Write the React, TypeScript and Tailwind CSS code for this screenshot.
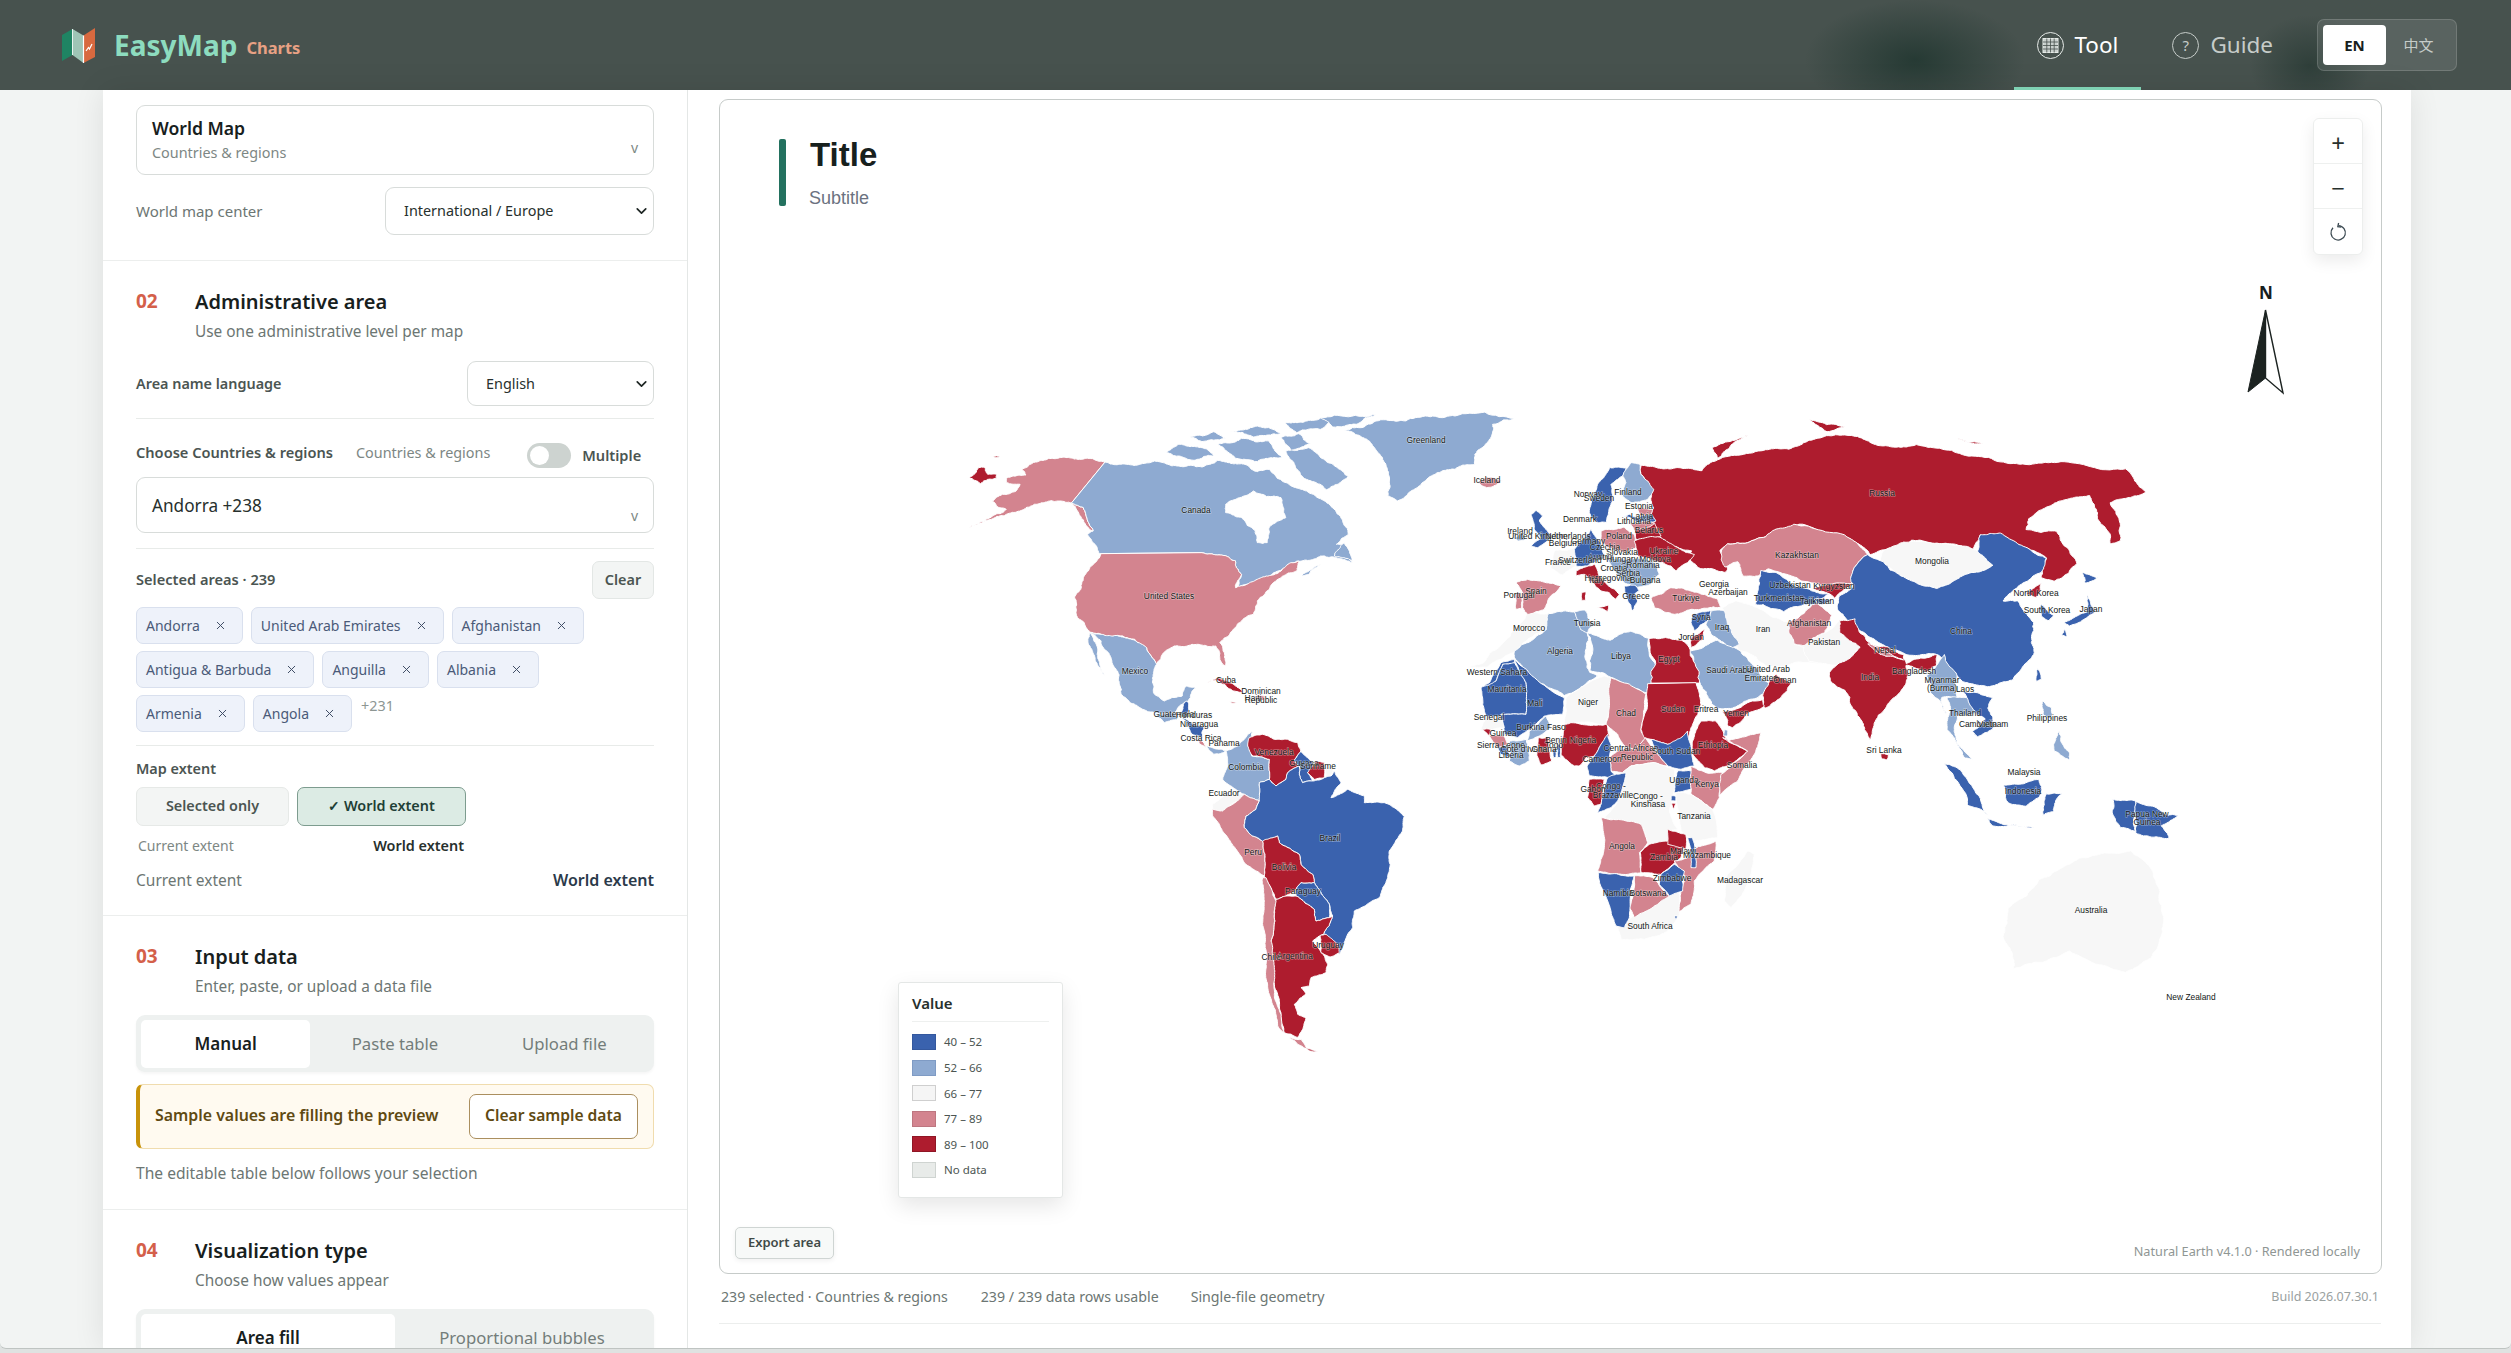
import { ChevronDown, X } from "lucide-react"

const B = "#3a62ae"
const L = "#8eaad1"
const W = "#f7f7f7"
const P = "#d3848f"
const R = "#ae1c2e"

type Shape = [string, string]
type Pt = [number, number]

// traced from the reference, each group in its own crop scale
const NORTH_AMERICA: Shape[] = [
  [P, "415,183 330,306 300,300 260,305 215,320 160,345 90,372 70,380 130,345 165,325 140,315 130,300 155,280 190,270 200,250 165,245 165,232 215,222 205,205 245,182 300,170 350,175"],
  [P, "330,306 360,320 385,390 375,385 345,330"],
  [R, "72,230 95,200 110,198 118,220 140,220 140,232 118,235 100,248 85,238"],
  [R, "133,165 148,165 146,169 135,169"],
  [L, "415,183 470,190 540,180 600,195 660,198 700,178 760,188 800,212 830,205 880,250 925,270 990,320 1030,400 1000,430 1020,430 1040,485 1000,470 960,465 900,480 880,490 820,530 750,560 760,520 745,480 700,462 660,455 400,458 395,440 370,400 385,390 360,320 330,306"],
  [L, "570,155 600,130 660,140 690,165 640,178 600,165"],
  [L, "630,108 690,92 720,112 660,122"],
  [L, "700,130 760,112 830,120 862,168 800,182 745,172"],
  [L, "730,92 800,75 860,98 790,108"],
  [L, "860,108 905,98 935,128 885,150"],
  [L, "872,150 930,140 1000,198 1030,228 975,266 930,238 900,205"],
  [L, "870,65 930,58 1000,50 960,85 900,95"],
  [L, "960,50 1100,40 1050,70 990,78"],
  [L, "910,525 960,490 930,520"],
  [L, "995,465 1020,425 1040,480"],
  ["#ffffff", "720,310 790,270 860,290 872,350 830,380 825,425 800,425 795,390 760,350 720,335"],
  [L, "1020,88 1100,60 1200,50 1300,45 1450,52 1395,70 1385,120 1350,160 1350,190 1300,205 1240,225 1180,280 1155,300 1130,285 1125,190 1110,160 1090,130 1060,105"],
  [P, "1358,245 1380,228 1420,238 1405,252 1380,260"],
  [P, "405,458 660,455 700,462 745,480 760,520 745,560 800,535 860,510 885,485 905,480 900,510 860,530 830,565 800,600 790,640 760,660 730,700 705,725 720,795 712,790 695,735 650,730 590,735 560,760 545,790 520,740 490,715 460,705 405,700 375,692 345,650 338,590 360,530 385,490"],
  [L, "375,695 405,700 460,708 490,718 520,740 545,790 535,830 540,880 565,900 610,885 620,855 645,860 625,900 590,935 560,945 510,925 455,880 450,820 430,770 405,720"],
  [L, "375,695 395,760 415,825 395,790 378,740"],
  [L, "540,940 590,935 600,955 565,965"],
  [B, "615,905 622,900 625,945 610,950"],
  [B, "610,950 665,978 660,1010 635,1000"],
  [P, "650,1010 670,1040 655,1030"],
  [L, "672,1035 720,1050 690,1060"],
  [R, "672,845 700,830 730,845 765,875 740,870 700,838"],
  [P, "800,880 822,885 815,900 800,895"],
  [P, "730,902 748,905 738,908"],
]

const SOUTH_AMERICA: Shape[] = [
  [L, "350,100 365,90 355,125 362,165 415,175 415,235 385,245 385,300 340,280 275,235 290,195 285,150 300,145 320,135"],
  [R, "355,110 395,100 430,115 470,115 500,125 510,150 490,180 505,195 470,215 465,235 435,255 415,235 415,175 365,165 350,135"],
  [B, "510,150 530,170 550,190 530,215 545,240 515,245 505,220 505,195 490,180"],
  [R, "555,180 580,185 580,230 550,235 530,215"],
  [W, "585,195 610,195 600,225 585,230"],
  [W, "245,310 280,285 340,280 320,300 275,330 245,325"],
  [P, "245,325 275,330 325,295 340,280 385,300 375,325 345,345 340,380 365,405 395,420 402,460 400,525 340,485 300,425 265,370 245,345"],
  [B, "385,245 415,235 435,255 465,235 470,215 505,195 505,220 515,245 545,240 580,230 600,225 610,210 630,245 600,290 650,265 700,285 700,305 760,305 820,345 815,390 775,450 770,530 745,590 670,630 665,680 625,760 620,730 578,700 605,645 595,610 580,590 550,545 545,520 510,490 505,460 445,425 440,405 400,425 365,405 340,380 345,345 375,325 385,300"],
  [R, "440,405 445,425 505,460 510,490 545,520 550,545 510,545 495,565 465,585 435,595 410,545 400,525 402,460 395,420"],
  [B, "495,565 510,545 550,545 580,590 595,610 595,650 555,660 550,625 495,585"],
  [R, "435,595 465,585 495,585 550,625 555,660 595,650 605,645 578,700 545,720 565,745 590,790 585,815 540,830 535,855 510,860 525,880 490,910 500,940 525,950 500,1010 460,995 450,940 440,880 425,800 420,720 430,640"],
  [P, "395,530 405,530 435,600 430,640 420,720 430,800 430,880 450,940 458,995 440,975 415,880 405,790 400,690 400,600"],
  [P, "475,1010 510,1015 530,1045 500,1030"],
  [R, "525,1040 560,1052 535,1050"],
  [R, "568,703 585,700 620,730 625,755 600,768 570,755"],
]

const ASIA: Shape[] = [
  [R, "470,180 530,190 590,195 610,170 700,140 760,135 800,110 870,95 930,122 1010,122 1100,150 1200,175 1300,170 1420,190 1460,255 1430,270 1390,285 1410,390 1390,400 1365,330 1350,265 1320,270 1270,295 1230,330 1225,360 1285,365 1325,455 1280,505 1255,495 1265,440 1200,400 1135,375 1120,415 1060,400 1000,390 985,410 920,430 880,385 780,345 715,380 640,400 625,420 640,470 635,480 590,470 560,440 570,420 510,390 490,360 495,300 480,230"],
  [R, "610,130 680,95 650,120 620,160"],
  [R, "800,52 870,72 835,86"],
  [R, "1090,105 1140,120 1110,115"],
  [P, "628,420 640,400 715,380 770,345 880,385 915,430 885,480 885,510 850,530 810,510 720,470 700,490 670,490 660,450 635,465"],
  [W, "945,420 985,395 1060,400 1130,420 1160,460 1100,490 1050,525 980,490 940,450"],
  [B, "1135,375 1175,370 1205,395 1265,440 1255,480 1200,530 1180,560 1210,560 1240,620 1240,710 1200,780 1150,800 1100,785 1060,720 1050,710 990,710 930,670 880,630 855,580 860,545 885,520 885,480 915,430 945,450 980,490 1050,525 1100,490 1160,460 1130,420"],
  [R, "1225,540 1255,510 1245,550"],
  [B, "1255,570 1280,600 1270,615 1255,600"],
  [B, "1335,480 1365,495 1340,510"],
  [B, "1345,540 1360,590 1310,630 1300,620 1345,590"],
  [B, "1300,640 1305,660 1295,655"],
  [W, "630,580 655,560 700,580 760,620 790,690 830,735 720,745 665,700 630,640"],
  [W, "790,690 770,680 830,650 860,615 900,690 860,740 800,730"],
  [P, "760,620 810,560 845,600 830,650 790,685 770,680"],
  [B, "700,530 705,475 735,480 795,525 840,540 810,570 790,570 750,590 710,570 695,570"],
  [R, "805,525 885,510 850,555 840,540"],
  [B, "810,555 850,555 820,570"],
  [R, "860,615 890,610 920,680 985,710 990,735 1050,710 1050,740 1030,760 990,740 990,790 950,860 920,950 900,890 870,810 845,790 840,760 880,720 900,690 860,650"],
  [P, "915,680 985,725 950,715"],
  [R, "940,988 955,990 952,1005 942,1002"],
  [L, "565,700 620,670 665,700 690,740 730,810 700,830 650,860 620,860 590,800"],
  [R, "710,855 735,765 765,790 745,830 715,860"],
  [R, "630,870 710,835 712,855 650,915 640,910"],
  [L, "1050,740 1065,710 1090,770 1090,830 1060,830 1070,880 1040,820 1030,770"],
  [L, "1070,830 1110,830 1130,875 1090,880 1090,960 1120,1005 1105,1000 1070,920"],
  [B, "1100,810 1160,830 1150,860 1165,910 1130,940 1120,925 1145,890"],
  [B, "1248,750 1255,780 1245,785"],
  [L, "1258,840 1275,860 1275,895 1260,880"],
  [L, "1290,925 1310,985 1310,1005 1280,980"],
  [B, "1065,1015 1100,1040 1150,1160 1110,1130"],
  [B, "1180,1075 1250,1060 1255,1100 1225,1135 1190,1125"],
  [B, "1265,1100 1295,1100 1280,1150 1258,1160"],
  [B, "1150,1170 1240,1195 1160,1190"],
  [B, "1395,1115 1440,1120 1440,1205 1410,1195"],
  [B, "1440,1120 1500,1160 1525,1160 1490,1190 1505,1225 1440,1210"],
  [W, "1190,1420 1250,1340 1330,1280 1430,1260 1470,1310 1480,1350 1495,1450 1470,1560 1420,1600 1310,1540 1200,1590 1180,1500"],
  // north africa sits in the same crop
  [W, "220,705 285,640 290,595 250,590 225,630 160,735 135,745 170,745"],
  [L, "222,700 285,640 290,595 355,590 365,640 370,760 385,770 320,825 265,785 225,725"],
  [L, "340,590 360,585 378,625 365,650 352,640"],
  [L, "365,650 410,670 450,645 485,665 490,820 445,800 415,775 370,755"],
  [R, "486,665 550,670 585,790 490,790"],
]

const EUROPE: Shape[] = [
  [B, "295,185 320,100 355,50 405,50 395,75 360,100 365,150 345,215 320,215 300,200"],
  [L, "395,75 420,35 447,40 450,70 488,115 470,145 420,155 395,135 405,95"],
  [B, "120,190 135,178 155,195 145,210 165,235 185,260 140,290 120,285 150,260 130,235"],
  [L, "72,260 95,245 105,265 80,270"],
  [W, "190,300 250,290 255,345 215,372 180,350"],
  [B, "250,295 300,235 330,275 340,320 300,335 290,345 255,345 255,320"],
  [P, "330,240 400,228 430,250 435,290 400,305 350,290 330,270"],
  [R, "430,240 490,215 510,255 470,270 435,265"],
  [R, "430,270 510,260 560,290 610,310 590,335 555,360 540,345 490,330 440,315 435,290"],
  [P, "440,170 485,175 480,190 450,195"],
  [B, "400,195 415,190 440,200 480,190 495,210 440,215"],
  [P, "415,215 470,210 490,218 430,240"],
  [L, "350,325 440,320 490,335 505,370 480,400 435,410 400,395 375,365"],
  [R, "255,360 310,340 325,375 385,430 375,445 355,425 330,420 300,390 280,370 255,375"],
  [R, "320,470 352,462 350,482"],
  [R, "272,425 285,422 283,448 272,448"],
  [B, "400,405 435,405 445,420 430,430 440,450 425,480 410,450"],
  [P, "75,395 110,385 210,405 175,440 160,475 110,490 95,470 95,425"],
  [P, "75,425 90,425 92,472 75,475"],
  [P, "480,440 540,410 600,420 680,445 690,470 600,475 550,490 490,470"],
  [B, "600,515 605,490 660,478 650,510 610,540"],
  [R, "600,560 640,535 635,565 600,590"],
  [L, "660,480 700,480 710,520 745,580 725,590 660,550 645,520"],
]

const AFRICA: Shape[] = [
  [B, "120,65 160,55 160,70 125,70 100,130 60,140 85,125 105,90"],
  [B, "60,140 105,120 125,70 160,65 195,125 195,220 120,220 125,250 75,225 65,190"],
  [B, "160,55 310,170 305,220 250,225 205,265 170,290 130,280 125,250 120,220 195,220 195,125"],
  [W, "75,230 120,225 130,260 60,270"],
  [R, "65,265 90,265 85,285"],
  [P, "85,285 130,285 140,310 110,320"],
  [B, "110,320 140,310 145,350 120,340"],
  [L, "145,300 195,295 205,360 175,375 145,360"],
  [L, "205,270 255,225 270,260 235,285 200,300"],
  [R, "232,290 262,290 272,360 240,372 228,345"],
  [B, "275,325 285,325 285,350 278,350"],
  [B, "290,310 300,310 298,350 290,350"],
  [W, "315,170 375,130 430,105 450,110 460,180 435,250 330,245 310,250"],
  [R, "310,250 330,245 440,250 445,285 420,310 400,345 375,350 355,375 340,375 300,340 305,290"],
  [P, "450,110 555,160 545,240 540,270 555,290 520,325 495,320 470,280 435,250 445,200"],
  [R, "560,128 705,125 720,190 695,250 680,300 640,305 620,310 570,295 550,290 540,265 545,240 558,205"],
  [B, "570,295 620,310 660,290 680,270 690,320 700,375 660,385 620,375 590,340"],
  [P, "445,350 470,330 500,320 520,325 555,290 590,340 620,375 580,365 510,375 485,395 450,390"],
  [B, "440,280 450,310 445,350 450,390 470,410 385,405 378,375 400,345 420,310"],
  [W, "485,395 510,375 580,365 640,385 640,450 625,510 650,565 620,570 620,600 560,610 540,550 430,530 470,480"],
  [B, "440,410 495,395 470,480 450,500 410,515 420,490"],
  [R, "385,415 430,415 420,490 400,495 380,470"],
  [B, "650,390 695,390 690,445 640,455"],
  [P, "690,375 735,395 785,395 775,470 755,505 690,460"],
  [R, "695,300 720,240 765,240 800,300 860,330 810,370 760,390 730,380 695,340"],
  [P, "785,290 800,300 900,275 880,340 830,420 775,465 780,400 860,330"],
  [L, "790,265 800,268 800,285 788,285"],
  [B, "630,465 645,465 645,480 630,480"],
  [R, "632,487 645,487 638,505"],
  [W, "645,455 690,460 755,505 770,590 700,600 660,570"],
  [P, "420,530 540,550 560,605 535,635 540,695 500,700 410,690 430,620"],
  [R, "565,610 620,600 620,570 670,610 660,650 600,700 560,695 540,695 538,635"],
  [R, "620,565 675,580 675,625 620,610"],
  [P, "695,625 765,600 760,660 700,720 690,790 650,815 660,745 675,710 640,660 680,650"],
  [B, "680,590 695,590 705,680 690,680 690,640"],
  [W, "505,835 590,790 650,740 655,820 620,870 550,895 480,895 470,860"],
  [P, "520,705 575,710 600,740 625,765 590,790 520,830 505,800"],
  [B, "600,700 640,670 670,690 665,750 625,765 595,730"],
  [B, "412,695 520,705 515,720 505,830 490,860 465,855 440,780 415,720"],
  [B, "640,825 650,825 645,835"],
  [W, "860,630 880,640 850,750 810,800 790,780 800,700"],
]

const LABELS: Array<[string, number, number]> = [
  ["Greenland", 1425, 439], ["Iceland", 1486, 479], ["Canada", 1195, 509], ["United States", 1168, 595],
  ["Mexico", 1134, 670], ["Cuba", 1225, 679], ["Dominican", 1260, 690], ["Haiti", 1252, 697], ["Republic", 1260, 699],
  ["Guatemala", 1173, 713], ["Honduras", 1193, 714], ["Nicaragua", 1198, 723], ["Costa Rica", 1200, 737], ["Panama", 1223, 742],
  ["Venezuela", 1273, 751], ["Guyana", 1303, 762], ["Suriname", 1317, 765], ["Colombia", 1245, 766], ["Ecuador", 1223, 792],
  ["Brazil", 1329, 837], ["Peru", 1252, 851], ["Bolivia", 1283, 866], ["Paraguay", 1302, 890], ["Uruguay", 1327, 944],
  ["Chile", 1270, 956], ["Argentina", 1294, 955],
  ["Norway", 1587, 493], ["Sweden", 1598, 497], ["Finland", 1627, 491], ["Estonia", 1638, 505], ["Latvia", 1641, 515],
  ["Lithuania", 1633, 520], ["Denmark", 1579, 518], ["Ireland", 1519, 530], ["United Kingdom", 1537, 535], ["Netherlands", 1567, 535],
  ["Belgium", 1563, 542], ["Germany", 1587, 540], ["Poland", 1618, 535], ["Belarus", 1648, 529], ["Czechia", 1604, 546],
  ["Slovakia", 1621, 551], ["Ukraine", 1663, 550], ["Austria", 1600, 556], ["Hungary", 1621, 558], ["Moldova", 1654, 558],
  ["France", 1557, 561], ["Switzerland", 1579, 559], ["Croatia", 1613, 567], ["Romania", 1642, 564], ["Herzegovina", 1607, 577],
  ["Serbia", 1627, 572], ["Bulgaria", 1644, 579], ["Italy", 1596, 579], ["Spain", 1535, 590], ["Portugal", 1518, 594],
  ["Greece", 1635, 595], ["Türkiye", 1685, 597], ["Georgia", 1713, 583], ["Azerbaijan", 1727, 591],
  ["Uzbekistan", 1789, 584], ["Kyrgyzstan", 1833, 585], ["Turkmenistan", 1778, 597], ["Tajikistan", 1816, 600],
  ["Kazakhstan", 1796, 554], ["Russia", 1881, 492], ["Mongolia", 1931, 560], ["North Korea", 2035, 592], ["South Korea", 2046, 609],
  ["Japan", 2090, 608], ["China", 1960, 630], ["Syria", 1700, 616], ["Iraq", 1721, 626], ["Iran", 1762, 628], ["Jordan", 1690, 636],
  ["Afghanistan", 1808, 622], ["Pakistan", 1823, 641], ["Nepal", 1884, 649], ["India", 1869, 676], ["Bangladesh", 1913, 670],
  ["Myanmar", 1941, 679], ["(Burma)", 1941, 687], ["Laos", 1964, 688], ["Thailand", 1964, 712], ["Cambodia", 1977, 723], ["Vietnam", 1992, 723],
  ["Philippines", 2046, 717], ["Sri Lanka", 1883, 749], ["Malaysia", 2023, 771], ["Indonesia", 2022, 790], ["Papua New", 2146, 813],
  ["Guinea", 2146, 821], ["Australia", 2090, 909], ["Saudi Arabia", 1729, 669], ["United Arab", 1767, 668], ["Emirates", 1760, 677],
  ["Oman", 1784, 679], ["New Zealand", 2190, 996], ["Morocco", 1528, 627], ["Tunisia", 1586, 622], ["Algeria", 1559, 650],
  ["Libya", 1620, 655], ["Egypt", 1668, 658], ["Western Sahara", 1496, 671], ["Mauritania", 1506, 688], ["Mali", 1534, 702],
  ["Niger", 1587, 701], ["Chad", 1625, 712], ["Sudan", 1672, 708], ["Eritrea", 1705, 708], ["Yemen", 1735, 712], ["Senegal", 1488, 716],
  ["Burkina Faso", 1540, 726], ["Guinea", 1502, 732], ["Benin", 1555, 739], ["Nigeria", 1582, 739], ["Togo", 1553, 744],
  ["Sierra Leone", 1500, 744], ["Côte d'Ivoire", 1523, 748], ["Ghana", 1543, 748], ["Liberia", 1510, 754], ["Central African", 1630, 747],
  ["Republic", 1636, 756], ["South Sudan", 1675, 750], ["Ethiopia", 1712, 744], ["Cameroon", 1601, 758], ["Somalia", 1741, 764],
  ["Uganda", 1683, 779], ["Kenya", 1706, 783], ["Congo -", 1610, 785], ["Gabon", 1592, 788], ["Brazzaville", 1612, 794],
  ["Congo -", 1647, 795], ["Kinshasa", 1647, 803], ["Tanzania", 1693, 815], ["Angola", 1621, 845], ["Malawi", 1682, 850],
  ["Zambia", 1663, 856], ["Mozambique", 1706, 854], ["Zimbabwe", 1671, 877], ["Madagascar", 1739, 879], ["Namibia", 1617, 892],
  ["Botswana", 1647, 892], ["South Africa", 1649, 925],
]

const CHIP_ROWS = [
  ["Andorra", "United Arab Emirates", "Afghanistan"],
  ["Antigua & Barbuda", "Anguilla", "Albania"],
]

const LEGEND = [
  ["40 – 52", "bg-[#3a62ae] border-[#34589e]"],
  ["52 – 66", "bg-[#8eaad1] border-[#7f9bc4]"],
  ["66 – 77", "bg-[#f5f5f5] border-[#cfcfcf]"],
  ["77 – 89", "bg-[#d3848f] border-[#bd7680]"],
  ["89 – 100", "bg-[#ae1c2e] border-[#8f1625]"],
  ["No data", "bg-[#e8ebe9] border-[#cfd4d1]"],
]

// the traced outlines are coarse: fray each edge a little so coasts look like coasts.
// displacement only depends on the edge, so neighbours sharing one stay glued together
function noise(x: number, y: number) {
  const s = Math.sin(x * 12.9898 + y * 78.233) * 43758.5453
  return s - Math.floor(s)
}

function fray(a: Pt, b: Pt, amount: number, depth: number): Pt[] {
  const dx = b[0] - a[0]
  const dy = b[1] - a[1]
  const len = Math.hypot(dx, dy)
  if (depth === 0 || len < 5) return []
  const flip = a[0] < b[0] || (a[0] === b[0] && a[1] < b[1]) ? 1 : -1
  const mx = (a[0] + b[0]) / 2
  const my = (a[1] + b[1]) / 2
  const d = (noise(mx, my) - 0.5) * len * amount * flip
  const mid: Pt = [mx - (dy / len) * d, my + (dx / len) * d]
  return [...fray(a, mid, amount, depth - 1), mid, ...fray(mid, b, amount, depth - 1)]
}

function isStraight(a: Pt, b: Pt) {
  const dx = Math.abs(b[0] - a[0])
  const dy = Math.abs(b[1] - a[1])
  if (dx > 90 && dy < dx * 0.04) return true
  // alaska / canada border
  return (a[0] === 415 && b[0] === 330) || (a[0] === 330 && b[0] === 415)
}

function outline(points: string, amount: number) {
  const pts = points.split(" ").map((p) => p.split(",").map(Number) as Pt)
  const out: Pt[] = []
  pts.forEach((a, i) => {
    const b = pts[(i + 1) % pts.length]
    out.push(a)
    if (!isStraight(a, b)) out.push(...fray(a, b, amount, 4))
  })
  return out.map((p) => `${p[0].toFixed(1)},${p[1].toFixed(1)}`).join(" ")
}

function Shapes({ shapes, transform, amount }: { shapes: Shape[]; transform: string; amount: number }) {
  return (
    <g transform={transform}>
      {shapes.map(([fill, points], i) => (
        <polygon key={i} points={outline(points, amount)} fill={fill} stroke="#ffffff" strokeWidth={1} strokeLinejoin="round" vectorEffect="non-scaling-stroke" />
      ))}
    </g>
  )
}

function WorldMap() {
  return (
    <svg className="absolute left-0 top-0" width="1663" height="1175" viewBox="719 99 1663 1175">
      <Shapes shapes={NORTH_AMERICA} transform="translate(940 400) scale(0.3954 0.3333)" amount={0.22} />
      <Shapes shapes={ASIA} transform="translate(1400 400) scale(0.5102 0.3571)" amount={0.2} />
      <Shapes shapes={SOUTH_AMERICA} transform="translate(1130 700) scale(0.3333)" amount={0.14} />
      <Shapes shapes={AFRICA} transform="translate(1460 640) scale(0.3333)" amount={0.12} />
      <Shapes shapes={EUROPE} transform="translate(1490 450) scale(0.3333)" amount={0.16} />
      <g fontFamily="'Liberation Sans', Arial, sans-serif" fontSize="8.4" textAnchor="middle" fill="#111614">
        {LABELS.map(([name, x, y], i) => (
          <text key={i} x={x} y={y + 3} stroke="rgba(255,255,255,0.45)" strokeWidth={1.2} paintOrder="stroke">
            {name}
          </text>
        ))}
      </g>
    </svg>
  )
}

function Logo() {
  return (
    <svg width="33" height="36" viewBox="0 0 33 36">
      <polygon points="0,8 10.5,2 10.5,28 0,34" fill="#1f8463" />
      <polygon points="10.5,2 21.5,8.5 21.5,36 10.5,28" fill="#9fc5b6" />
      <polygon points="21.5,8.5 33,1 33,30 21.5,36" fill="#d8693f" />
      <line x1="21.5" y1="8.5" x2="21.5" y2="36" stroke="#ffffff" strokeWidth="1.2" />
      <line x1="10.5" y1="2" x2="10.5" y2="28" stroke="#e9f3ef" strokeWidth="1" />
      <polyline points="24,24 26.5,20.5 27.5,22 30,17" fill="none" stroke="#ffffff" strokeWidth="1.2" />
    </svg>
  )
}

function SectionHead({ num, title, sub }: { num: string; title: string; sub: string }) {
  return (
    <div className="flex">
      <div className="w-[59px] text-[19px] font-bold leading-[26px] text-[#d4604a]">{num}</div>
      <div>
        <div className="text-[20px] font-semibold leading-[28px] text-[#17201d]">{title}</div>
        <div className="mt-[2px] text-[15.4px] leading-[27px] text-[#6c7673]">{sub}</div>
      </div>
    </div>
  )
}

function Chip({ name }: { name: string }) {
  return (
    <span className="flex h-[37px] items-center gap-[14px] rounded-[7px] border border-[#d9e0ee] bg-[#eef2fa] pl-[9px] pr-[15px] text-[14px] text-[#4a5a78]">
      {name}
      <X size={13} strokeWidth={1.8} className="text-[#3c4a63]" />
    </span>
  )
}

function Tabs({ items, cols }: { items: string[]; cols: string }) {
  return (
    <div className={`grid ${cols} h-[57px] rounded-[9px] bg-[#eef1f0] p-[5px] shadow-[0_2px_3px_rgba(0,0,0,0.04)]`}>
      {items.map((item, i) => (
        <div
          key={item}
          className={
            i === 0
              ? "flex h-[48px] items-center justify-center rounded-[5px] bg-white text-[17px] font-semibold text-[#17201d]"
              : "flex h-[48px] items-center justify-center text-[16.7px] text-[#737d7a]"
          }
        >
          {item}
        </div>
      ))}
    </div>
  )
}

function Select({ value, width, height }: { value: string; width: string; height: string }) {
  return (
    <div className={`relative ${width} ${height}`}>
      <select className="h-full w-full appearance-none rounded-[9px] border border-[#d8dcda] bg-white pl-[18px] text-[14.4px] text-[#27302d]">
        <option>{value}</option>
      </select>
      <ChevronDown size={17} strokeWidth={2.4} className="absolute right-[4px] top-1/2 -translate-y-1/2 text-[#1f2725]" />
    </div>
  )
}

export default function App() {
  return (
    <div className="h-screen overflow-hidden bg-[#dfe2e1]">
      <div className="flex h-[1349px] flex-col overflow-hidden rounded-b-[6px] border-b border-[#bfc4c2] bg-[#f2f4f3] font-['Noto_Sans',sans-serif]">
        {/* Top bar */}
        <header className="flex h-[90px] shrink-0 items-center bg-[#47524e] bg-[radial-gradient(ellipse_110px_60px_at_1915px_60px,#263a34,transparent),radial-gradient(ellipse_60px_50px_at_2310px_65px,#2f3f3a,transparent)] pl-[62px] pr-[54px]">
          <Logo />
          <span className="ml-[19px] text-[28px] font-bold leading-none text-[#8ddcbf]">EasyMap</span>
          <span className="ml-[9px] mt-[6px] text-[16.5px] font-bold leading-none text-[#e8a184]">Charts</span>
          <nav className="ml-auto flex h-full items-center">
            <div className="relative flex h-full w-[127px] items-center justify-center gap-[10px] text-[22.5px] text-white">
              <svg width="27" height="27" viewBox="0 0 27 27" fill="none" stroke="#e6ebe8">
                <circle cx="13.5" cy="13.5" r="13" />
                <rect x="6" y="6.5" width="15" height="14" fill="#c9d0cd" stroke="#e6ebe8" />
                <path d="M9.8 6.5v14M13.5 6.5v14M17.2 6.5v14M6 10h15M6 13.5h15M6 17h15" stroke="#47524e" strokeWidth="0.8" />
              </svg>
              Tool
              <div className="absolute bottom-0 left-0 h-[3.5px] w-full bg-[#7fd1b3]" />
            </div>
            <div className="ml-[31px] flex items-center gap-[11px] text-[22.5px] text-[#c6ccc9]">
              <span className="flex h-[27px] w-[27px] items-center justify-center rounded-full border border-[#c6ccc9] text-[15px]">?</span>
              Guide
            </div>
            <div className="ml-[44px] flex h-[52px] w-[140px] rounded-[7px] border border-white/15 bg-white/10 p-[5px]">
              <div className="flex h-full w-[63px] items-center justify-center rounded-[4px] bg-white text-[15px] font-bold text-[#17201d]">EN</div>
              <div className="flex flex-1 items-center justify-center font-['Noto_Sans_CJK_SC',sans-serif] text-[15px] text-[#c6ccc9]">中文</div>
            </div>
          </nav>
        </header>

        <main className="ml-[103px] mr-[100px] flex h-[1259px] bg-white shadow-[0_0_30px_rgba(0,0,0,0.09)]">
          {/* Left controls */}
          <aside className="w-[585px] shrink-0 overflow-hidden border-r border-[#e4e7e6]">
            <div className="border-b border-[#eceeed] px-[33px] pb-[25px] pt-[15px]">
              <div className="relative h-[70px] rounded-[9px] border border-[#d8dcda] px-[15px] pt-[8px]">
                <div className="text-[17.6px] font-semibold leading-[28px] text-[#17201d]">World Map</div>
                <div className="text-[14.4px] leading-[22px] text-[#7d8784]">Countries & regions</div>
                <span className="absolute right-[15px] top-[31px] text-[14px] text-[#7d8784]">v</span>
              </div>
              <div className="mt-[12px] flex items-center justify-between">
                <span className="text-[15px] text-[#6c7673]">World map center</span>
                <Select value="International / Europe" width="w-[269px]" height="h-[48px]" />
              </div>
            </div>

            <div className="border-b border-[#eceeed] px-[33px] pb-[23px] pt-[27px]">
              <SectionHead num="02" title="Administrative area" sub="Use one administrative level per map" />
              <div className="mt-[16px] flex items-center justify-between border-b border-[#e8ebe9] pb-[12px]">
                <span className="text-[14.4px] font-semibold text-[#4b5552]">Area name language</span>
                <Select value="English" width="w-[187px]" height="h-[45px]" />
              </div>
              <div className="mt-[24px] flex h-[25px] items-center">
                <span className="mb-[5px] text-[14.6px] font-semibold text-[#4b5552]">Choose Countries & regions</span>
                <span className="mb-[5px] ml-[23px] text-[14.4px] text-[#7d8784]">Countries & regions</span>
                <span className="ml-[37px] flex h-[25px] w-[44px] items-center rounded-full bg-[#cdd3d0] p-[3px]">
                  <span className="h-[19px] w-[19px] rounded-full bg-white" />
                </span>
                <span className="ml-[11px] text-[14.6px] font-semibold text-[#4b5552]">Multiple</span>
              </div>
              <div className="relative mt-[9px] h-[56px] rounded-[9px] border border-[#d8dcda] pl-[15px] pt-[15px] text-[17.2px] leading-[26px] text-[#27302d]">
                Andorra +238
                <span className="absolute right-[15px] top-[25px] text-[14px] text-[#7d8784]">v</span>
              </div>
              <div className="mt-[15px] flex items-center justify-between border-t border-[#e8ebe9] pt-[12px]">
                <span className="text-[14.6px] font-semibold text-[#4b5552]">Selected areas · 239</span>
                <button className="h-[38px] w-[62px] rounded-[7px] border border-[#e3e7e5] bg-[#f3f5f4] text-[14.4px] font-semibold text-[#4b5552]">Clear</button>
              </div>
              <div className="mt-[8px] flex flex-col gap-[7px] border-b border-[#e8ebe9] pb-[13px]">
                {CHIP_ROWS.map((row) => (
                  <div key={row[0]} className="flex gap-[8px]">
                    {row.map((name) => (
                      <Chip key={name} name={name} />
                    ))}
                  </div>
                ))}
                <div className="flex gap-[8px]">
                  <Chip name="Armenia" />
                  <Chip name="Angola" />
                  <span className="ml-[1px] text-[14.4px] leading-[22px] text-[#8d9693]">+231</span>
                </div>
              </div>
              <div className="mt-[12px] text-[14.4px] font-semibold text-[#4b5552]">Map extent</div>
              <div className="mt-[7px] flex gap-[8px]">
                <button className="h-[39px] w-[153px] rounded-[7px] border border-[#e6e9e7] bg-[#f3f5f4] text-[14.4px] font-semibold text-[#4b5552]">Selected only</button>
                <button className="h-[39px] w-[169px] rounded-[7px] border border-[#7d9c8f] bg-[#dcebe4] text-[14.4px] font-semibold text-[#1f3f36]">✓ World extent</button>
              </div>
              <div className="mt-[9px] flex w-[328px] justify-between pl-[2px] text-[14px] leading-[22px]">
                <span className="text-[#7d8784]">Current extent</span>
                <span className="text-[14.4px] font-semibold text-[#27302d]">World extent</span>
              </div>
              <div className="mt-[11px] flex justify-between text-[15.5px] leading-[24px]">
                <span className="text-[#6c7673]">Current extent</span>
                <span className="text-[16px] font-semibold text-[#2b3a4a]">World extent</span>
              </div>
            </div>

            <div className="border-b border-[#eceeed] px-[33px] pb-[25px] pt-[27px]">
              <SectionHead num="03" title="Input data" sub="Enter, paste, or upload a data file" />
              <div className="mt-[15px]">
                <Tabs items={["Manual", "Paste table", "Upload file"]} cols="grid-cols-3" />
              </div>
              <div className="mt-[12px] flex h-[65px] items-center justify-between rounded-[7px] border border-l-[4px] border-[#f0dcae] border-l-[#c8930a] bg-[#fffaf0] pl-[15px] pr-[15px]">
                <span className="text-[15.9px] font-semibold text-[#5f4a12]">Sample values are filling the preview</span>
                <button className="h-[45px] w-[169px] rounded-[7px] border border-[#ab8f5f] bg-white text-[15.6px] font-semibold text-[#5f4a12]">Clear sample data</button>
              </div>
              <div className="mt-[13px] text-[15.6px] leading-[22px] text-[#6c7673]">The editable table below follows your selection</div>
            </div>

            <div className="px-[33px] pt-[27px]">
              <SectionHead num="04" title="Visualization type" sub="Choose how values appear" />
              <div className="mt-[15px]">
                <Tabs items={["Area fill", "Proportional bubbles"]} cols="grid-cols-2" />
              </div>
            </div>
          </aside>

          {/* Map side */}
          <section className="min-w-0 flex-1 pl-[31px] pr-[30px] pt-[9px]">
            <div className="relative h-[1175px] w-[1663px] overflow-hidden rounded-[9px] border border-[#c6cbc9]">
              <WorldMap />
              <div className="absolute left-[59px] top-[39px] h-[67px] w-[7px] rounded-[2px] bg-[#23715f]" />
              <div className="absolute left-[90px] top-[33px] font-['Liberation_Sans',sans-serif] text-[33px] font-bold leading-[44px] text-[#17201d]">Title</div>
              <div className="absolute left-[89px] top-[85px] font-['Liberation_Sans',sans-serif] text-[18px] leading-[26px] text-[#6b7280]">Subtitle</div>

              <div className="absolute left-[1593px] top-[18px] w-[50px] divide-y divide-[#eef0ef] rounded-[6px] border border-[#eceeed] bg-white text-[#27302d] shadow-[0_6px_16px_rgba(0,0,0,0.08)]">
                <div className="flex h-[45px] items-center justify-center pt-[4px] text-[24px] leading-none">+</div>
                <div className="flex h-[45px] items-center justify-center pt-[4px] text-[24px] leading-none">−</div>
                <div className="flex h-[45px] items-center justify-center">
                  <svg width="18" height="20" viewBox="0 0 18 20" fill="none" stroke="#3c4a52" strokeWidth="1.3">
                    <path d="M9.5 3.6A7.2 7.2 0 1 1 4 5.8" />
                    <path d="M9.6 1 8.8 4.6 12.4 5.2" />
                  </svg>
                </div>
              </div>

              <div className="absolute left-[1536px] top-[180px] w-[20px] text-center text-[17px] font-bold leading-[26px] text-[#17201d]">N</div>
              <svg className="absolute left-[1527px] top-[209px]" width="38" height="86" viewBox="0 0 38 86">
                <polygon points="18.5,1 1,83 18.5,69" fill="#1c2321" stroke="#1c2321" />
                <polygon points="18.5,1 36,84 18.5,69" fill="#ffffff" stroke="#1c2321" strokeWidth="1.4" />
              </svg>

              <div className="absolute left-[178px] top-[882px] h-[216px] w-[165px] rounded-[3px] border border-[#e4e7e6] bg-white px-[13px] pt-[8px] shadow-[0_8px_22px_rgba(0,0,0,0.1)]">
                <div className="border-b border-[#eef0ef] pb-[6px] text-[15px] font-semibold leading-[24px] text-[#27302d]">Value</div>
                <div className="mt-[12px] flex flex-col gap-[9.6px]">
                  {LEGEND.map(([label, color]) => (
                    <div key={label} className="flex h-[16px] items-center gap-[8px]">
                      <span className={`h-[16px] w-[24px] border ${color}`} />
                      <span className="text-[11.5px] text-[#4b5552]">{label}</span>
                    </div>
                  ))}
                </div>
              </div>

              <button className="absolute left-[15px] top-[1127px] h-[32px] w-[99px] rounded-[5px] border border-[#cfd5d3] bg-[#f7f9f8] text-[13px] font-semibold text-[#3f4a47] shadow-[0_2px_5px_rgba(0,0,0,0.06)]">Export area</button>
              <div className="absolute right-[21px] top-[1141px] text-[12.7px] leading-[20px] text-[#8f9694]">Natural Earth v4.1.0 · Rendered locally</div>
            </div>

            <div className="mt-[12px] flex items-center border-b border-[#eceeed] pb-[15px] pl-[2px] pr-[2px] text-[14.2px] leading-[22px] text-[#6c7673]">
              <span>239 selected · Countries & regions</span>
              <span className="ml-[33px]">239 / 239 data rows usable</span>
              <span className="ml-[32px]">Single-file geometry</span>
              <span className="ml-auto text-[12.5px] text-[#9aa19f]">Build 2026.07.30.1</span>
            </div>
          </section>
        </main>
      </div>
    </div>
  )
}
